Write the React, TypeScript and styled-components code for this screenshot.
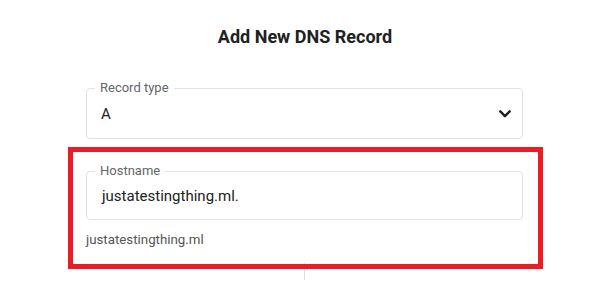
import React from "react";
import styled, { createGlobalStyle } from "styled-components";

const GlobalStyle = createGlobalStyle`
  html, body {
    margin: 0;
    padding: 0;
    background: #ffffff;
  }
  body {
    font-family: Roboto, "Liberation Sans", Arial, sans-serif;
    color: #212121;
  }
`;

const Page = styled.div`
  width: 610px;
  height: 298px;
  overflow: hidden;
  display: flex;
  flex-direction: column;
`;

const Title = styled.h2`
  margin: 25px 0 0;
  font-size: 18px;
  line-height: 24px;
  font-weight: 700;
  text-align: center;
  color: #212121;
`;

const Form = styled.form`
  display: flex;
  flex-direction: column;
  padding: 0 87px 0 86px;
  margin-top: 39px;
`;

const Outline = styled.div<{ $height: number; $pad: number }>`
  position: relative;
  box-sizing: border-box;
  height: ${(p) => p.$height}px;
  border: 1px solid #e2e2e2;
  border-radius: 4px;
  display: flex;
  align-items: center;
  justify-content: space-between;
  padding: 0 11px 0 ${(p) => p.$pad}px;
`;

const FloatingLabel = styled.label`
  position: absolute;
  top: -9px;
  left: 8px;
  padding: 0 5px;
  background: #ffffff;
  font-size: 13px;
  line-height: 16px;
  color: #666666;
`;

const Value = styled.span`
  font-size: 15px;
  line-height: 20px;
  color: #212121;
`;

const Group = styled.div`
  position: relative;
  margin-top: 32px;
  display: flex;
  flex-direction: column;
`;

const Helper = styled.div`
  margin-top: 12px;
  font-size: 13.3px;
  line-height: 16px;
  color: #555555;
`;

const Highlight = styled.div`
  position: absolute;
  top: -24px;
  left: -18px;
  right: -20px;
  bottom: -21px;
  border: 5px solid #ed1c24;
  pointer-events: none;
`;

const Footer = styled.div`
  margin-top: 15px;
  height: 17px;
  display: flex;
  justify-content: center;
`;

const Divider = styled.div`
  width: 1px;
  height: 100%;
  background: #dddddd;
`;

const Chevron = () => (
  <svg width="12" height="8" viewBox="0 0 12 8" aria-hidden="true">
    <polyline
      points="1.3,1.3 6,6.2 10.7,1.3"
      fill="none"
      stroke="#1f1f1f"
      strokeWidth="2.4"
      strokeLinecap="round"
      strokeLinejoin="round"
    />
  </svg>
);

export default function App() {
  return (
    <>
      <GlobalStyle />
      <Page>
        <Title>Add New DNS Record</Title>
        <Form onSubmit={(e) => e.preventDefault()}>
          <Outline $height={51} $pad={14}>
            <FloatingLabel>Record type</FloatingLabel>
            <Value>A</Value>
            <Chevron />
          </Outline>

          <Group>
            <Outline $height={49} $pad={15}>
              <FloatingLabel>Hostname</FloatingLabel>
              <Value>justatestingthing.ml.</Value>
            </Outline>
            <Helper>justatestingthing.ml</Helper>
            <Highlight />
          </Group>

          <Footer>
            <Divider />
          </Footer>
        </Form>
      </Page>
    </>
  );
}
